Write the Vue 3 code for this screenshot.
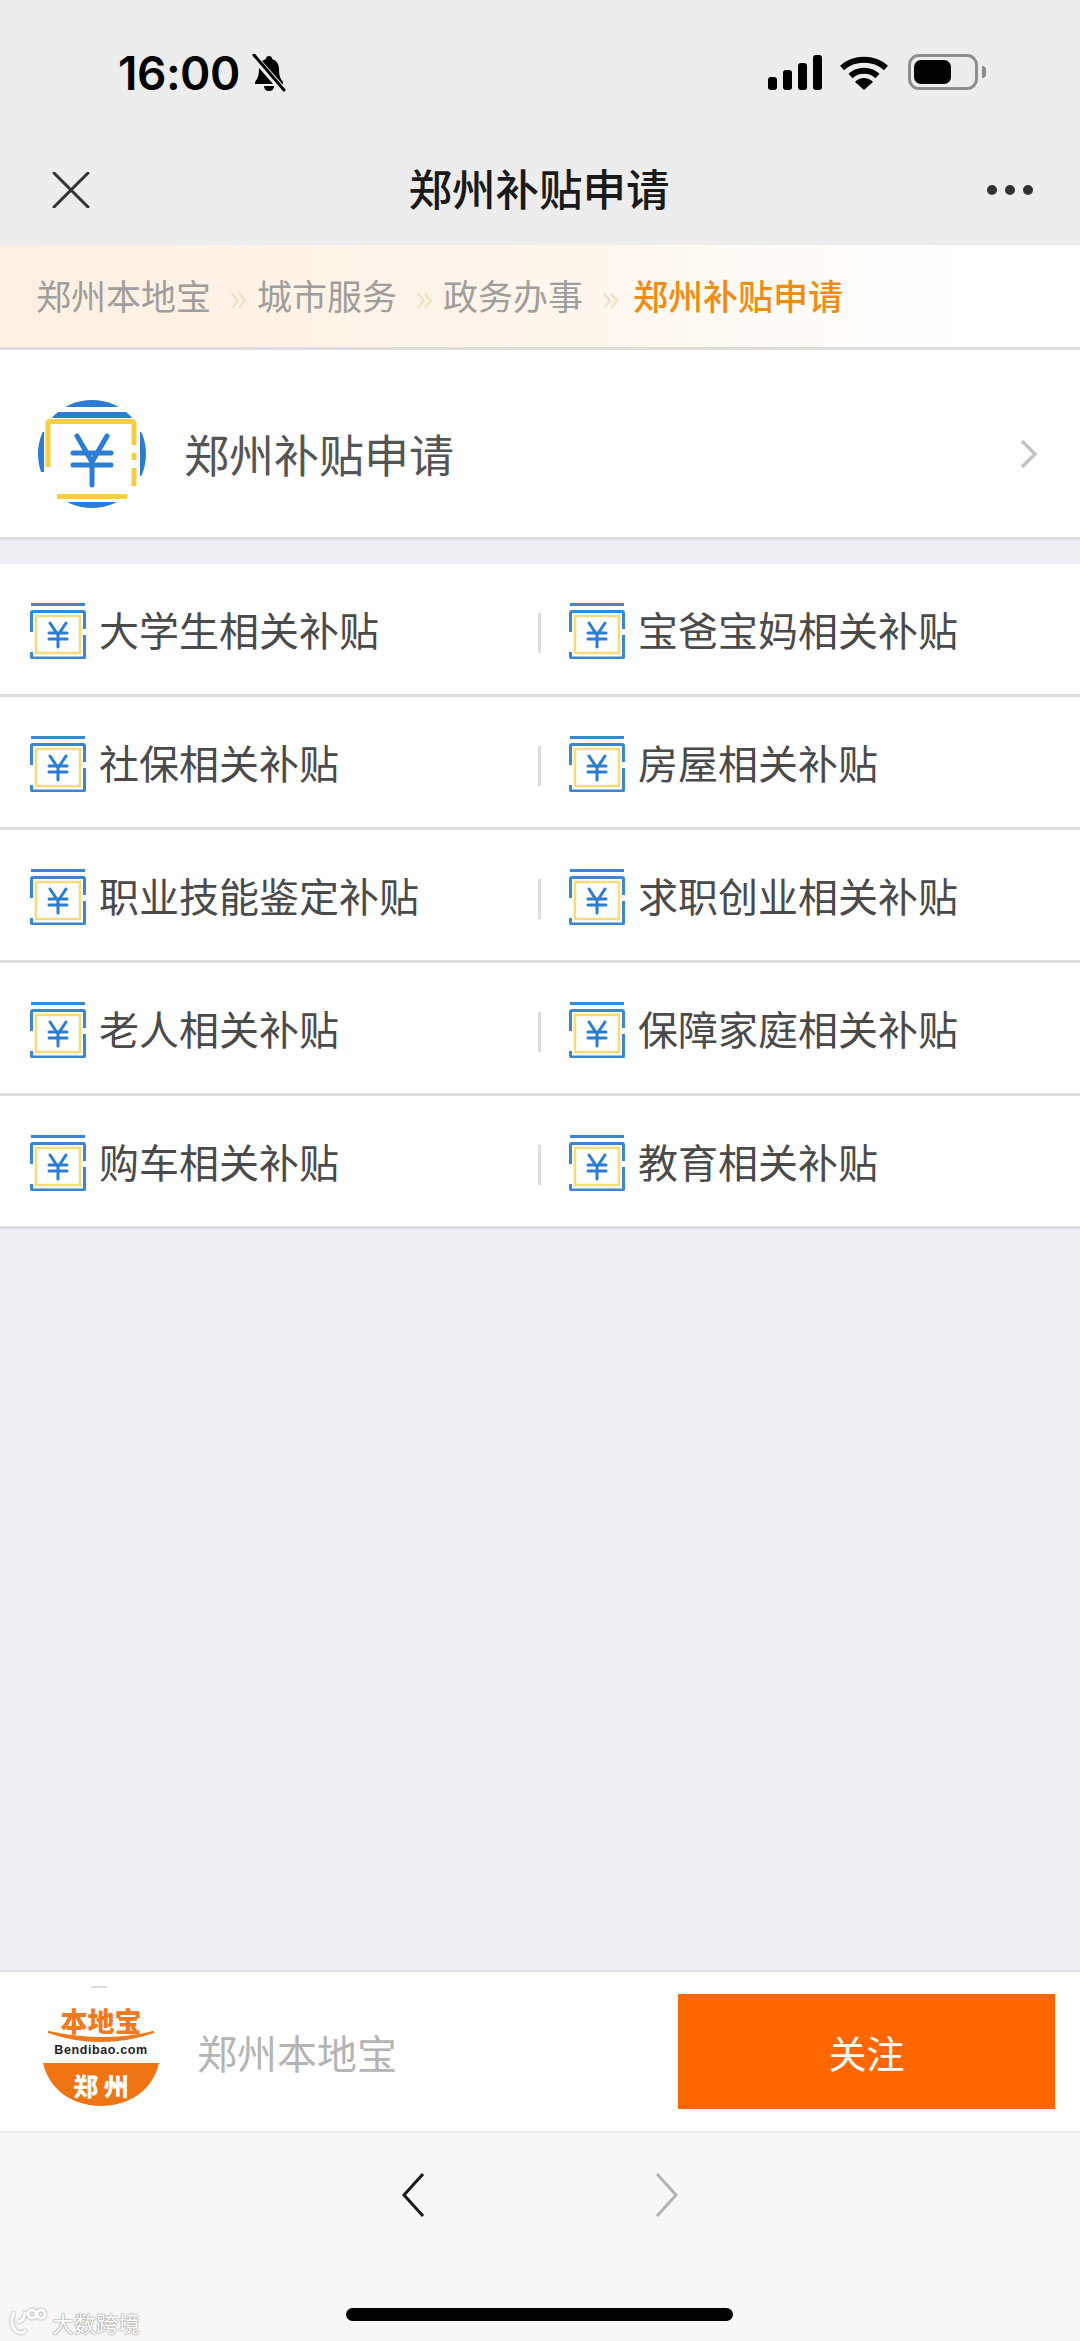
<template>
  <div class="page">
    <header class="top">
      <div class="status">
        <div class="status-left">
          <span class="time">16:00</span>
          <svg class="bell" viewBox="0 0 38 38">
            <path d="M19 2c2 0 3 1.300 3 3 5 1.500 7 5.500 7 10 0 6 1 9 4 13v2H5v-2c3-4 4-7 4-13 0-4.500 2-8.500 7-10 0-1.700 1-3 3-3z" fill="#000" />
            <path d="M14 32h10c0 3-2 5-5 5s-5-2-5-5z" fill="#000" />
            <path d="M4 3l29 33" stroke="#ededed" stroke-width="7" />
            <path d="M4 1l30 35" stroke="#000" stroke-width="3" stroke-linecap="round" />
          </svg>
        </div>
        <div class="status-right">
          <div class="signal">
            <i v-for="h in [13, 20, 27, 35]" :key="h" :style="{ height: h + 'px' }"></i>
          </div>
          <svg class="wifi" viewBox="0 0 48 35">
            <path d="M2 13C14 2 34 2 46 13" fill="none" stroke="#000" stroke-width="6" />
            <path d="M10.500 21C18 14 30 14 37.500 21" fill="none" stroke="#000" stroke-width="6" />
            <path d="M15 27C20 21.500 28 21.500 33 27L24 35z" fill="#000" />
          </svg>
          <div class="battery">
            <div class="battery-body"><span class="battery-fill"></span></div>
            <span class="battery-nub"></span>
          </div>
        </div>
      </div>
      <div class="nav">
        <svg class="close" viewBox="0 0 38 36">
          <path d="M2 1l34 34M36 1L2 35" stroke="#333" stroke-width="3" stroke-linecap="round" />
        </svg>
        <span class="nav-title">郑州补贴申请</span>
        <div class="more"><i></i><i></i><i></i></div>
      </div>
    </header>

    <nav class="crumbs">
      <template v-for="(c, i) in crumbs" :key="c">
        <span class="crumb" :class="{ current: i === crumbs.length - 1 }">{{ c }}</span>
        <span v-if="i < crumbs.length - 1" class="crumb-sep">»</span>
      </template>
    </nav>

    <section class="head-card">
      <svg class="head-icon" viewBox="0 0 108 108">
        <defs>
          <clipPath id="coin"><circle cx="54" cy="54" r="54" /></clipPath>
        </defs>
        <g clip-path="url(#coin)" fill="#2b7cd3">
          <rect x="0" y="0" width="108" height="7" />
          <rect x="0" y="12" width="108" height="6" />
          <rect x="0" y="32" width="6" height="40" />
          <rect x="102" y="32" width="6" height="44" />
          <rect x="0" y="102" width="108" height="6" />
        </g>
        <path d="M10 67V24q0-2.500 2.500-2.500h81q2.500 0 2.500 2.500v21M96 53v7M96 68v18M19 96.500h70" fill="none" stroke="#f2cf45" stroke-width="5" />
        <path d="M39 36l15 26 15-26M35 53h38M35 65h38M54 62v23" fill="none" stroke="#2b7cd3" stroke-width="5" stroke-linecap="round" stroke-linejoin="round" />
      </svg>
      <span class="head-text">郑州补贴申请</span>
      <svg class="head-arrow" viewBox="0 0 18 30">
        <path d="M2 2l13 13L2 28" fill="none" stroke="#c4c4c4" stroke-width="3.500" />
      </svg>
    </section>

    <main class="main">
      <ul class="grid">
        <li v-for="(item, i) in items" :key="item" class="cell" :class="{ right: i % 2 === 1 }">
          <svg class="cell-icon" viewBox="0 0 56 56">
            <path d="M1 1.500h54" stroke="#3b86cf" stroke-width="3" />
            <path d="M1.500 29V10q0-1.500 1.500-1.500h50q1.500 0 1.500 1.500v16M54.500 32v22q0 1-1 1H3q-1.500 0-1.500-1.500V49" fill="none" stroke="#3b86cf" stroke-width="3" />
            <rect x="6" y="13" width="44" height="37" fill="none" stroke="#f4dc7c" stroke-width="2.500" />
            <path d="M20 20l8 12 8-12M19 30h18M19 36h18M28 32v12" fill="none" stroke="#2b7cd3" stroke-width="3" stroke-linecap="round" stroke-linejoin="round" />
          </svg>
          <span class="cell-text">{{ item }}</span>
        </li>
      </ul>
    </main>

    <footer class="follow">
      <svg class="logo" viewBox="0 0 120 122">
        <path d="M50 1h16" stroke="#bbb" stroke-width="1" />
        <text x="60" y="46" class="logo-top" text-anchor="middle">本地宝</text>
        <path d="M7 46q52 18 106 0q-50 12-106 0z" fill="#ef7a1f" stroke="#ef7a1f" stroke-width="2" />
        <text x="60" y="68" class="logo-mid" text-anchor="middle">Bendibao.com</text>
        <path d="M2 77h116C112 104 88 120 60 120S8 104 2 77z" fill="#ef7414" />
        <text x="60" y="110" class="logo-bot" text-anchor="middle">郑 州</text>
      </svg>
      <span class="follow-name">郑州本地宝</span>
      <button class="follow-btn">关注</button>
    </footer>

    <div class="bottom">
      <div class="arrows">
        <svg viewBox="0 0 24 44"><path d="M22 1L3 22l19 21" fill="none" stroke="#1a1a1a" stroke-width="3" /></svg>
        <svg viewBox="0 0 24 44"><path d="M2 1l19 21L2 43" fill="none" stroke="#b4b4b4" stroke-width="3" /></svg>
      </div>
      <div class="home-bar"></div>
      <div class="watermark">
        <svg viewBox="0 0 40 28">
          <path d="M6 4c-3 7-3 14 2 19 4 3 8 2 10-1M10 14c5-1 7-5 7-10M20 6a4 4 0 1 0 8 0a4 4 0 1 0-8 0M29 6a4 4 0 1 0 8 0a4 4 0 1 0-8 0" fill="none" stroke="#fff" stroke-width="3" />
        </svg>
        <span>大数跨境</span>
      </div>
    </div>
  </div>
</template>

<script setup>
const crumbs = ['郑州本地宝', '城市服务', '政务办事', '郑州补贴申请'];

const items = [
  '大学生相关补贴',
  '宝爸宝妈相关补贴',
  '社保相关补贴',
  '房屋相关补贴',
  '职业技能鉴定补贴',
  '求职创业相关补贴',
  '老人相关补贴',
  '保障家庭相关补贴',
  '购车相关补贴',
  '教育相关补贴'
];
</script>

<style>
html,
body {
  margin: 0;
  background: #eeeff4;
}
</style>

<style scoped>
.page {
  width: 1080px;
  height: 2341px;
  display: flex;
  flex-direction: column;
  position: relative;
  overflow: hidden;
  background: #eeeff4;
  font-family: "Noto Sans CJK SC", "Noto Sans", sans-serif;
  color: #4a4a4a;
}

.top {
  height: 245px;
  background: #ededed;
  flex: none;
}

.status {
  height: 145px;
  box-sizing: border-box;
  padding: 54px 94px 0 118px;
  display: flex;
  justify-content: space-between;
  align-items: flex-start;
}

.status-left {
  display: flex;
  align-items: center;
  gap: 10px;
}

.time {
  font-family: Inter, sans-serif;
  font-size: 46px;
  line-height: 38px;
  font-weight: 600;
  letter-spacing: -0.5px;
  color: #000;
}

.bell {
  width: 38px;
  height: 38px;
}

.status-right {
  display: flex;
  align-items: flex-start;
}

.signal {
  display: flex;
  align-items: flex-end;
  gap: 6px;
  height: 35px;
  margin-top: 1px;
}

.signal i {
  display: block;
  width: 9px;
  background: #000;
  border-radius: 3px;
}

.wifi {
  width: 48px;
  height: 35px;
  margin: 1px 0 0 18px;
}

.battery {
  display: flex;
  align-items: center;
  margin-left: 20px;
}

.battery-body {
  width: 70px;
  height: 36px;
  box-sizing: border-box;
  border: 3px solid #8e8e8e;
  border-radius: 11px;
  padding: 3px;
}

.battery-fill {
  display: block;
  width: 37px;
  height: 24px;
  background: #000;
  border-radius: 7px;
}

.battery-nub {
  width: 4px;
  height: 12px;
  margin-left: 4px;
  background: #8e8e8e;
  border-radius: 0 4px 4px 0;
}

.nav {
  height: 90px;
  box-sizing: border-box;
  padding-bottom: 6px;
  position: relative;
  display: flex;
  align-items: center;
  justify-content: center;
}

.close {
  position: absolute;
  left: 52px;
  top: 27px;
  width: 38px;
  height: 36px;
}

.nav-title {
  font-size: 43.500px;
  font-weight: 500;
  color: #1a1a1a;
  margin-right: 2px;
}

.more {
  position: absolute;
  left: 987px;
  top: 40px;
  display: flex;
  gap: 8px;
}

.more i {
  display: block;
  width: 10px;
  height: 10px;
  border-radius: 50%;
  background: #333;
}

.crumbs {
  height: 105px;
  flex: none;
  box-sizing: border-box;
  padding: 0 0 3px 36px;
  display: flex;
  align-items: center;
  background: linear-gradient(90deg, #fdf0e2 0%, #fff5ea 45%, #ffffff 90%);
  border-bottom: 3px solid #dedede;
}

.crumb {
  font-size: 35px;
  line-height: 50px;
  color: #a09e9c;
}

.crumb.current {
  margin-left: 4px;
  color: #ef8c14;
  font-weight: 500;
}

.crumb-sep {
  width: 20px;
  margin: 0 9px 0 17px;
  font-size: 40px;
  line-height: 50px;
  text-align: center;
  color: #f3e2c8;
}

.head-card {
  height: 190px;
  flex: none;
  box-sizing: border-box;
  padding: 20px 42px 0 38px;
  display: flex;
  align-items: center;
  background: #fff;
  border-bottom: 3px solid #dedede;
}

.head-icon {
  width: 108px;
  height: 108px;
  flex: none;
}

.head-text {
  flex: 1;
  margin-left: 38px;
  font-size: 45px;
  color: #555;
}

.head-arrow {
  width: 18px;
  height: 30px;
}

.main {
  flex: 1;
  padding-top: 24px;
}

.grid {
  list-style: none;
  margin: 0;
  padding: 0;
  display: grid;
  grid-template-columns: 538px 542px;
  background: #fff;
}

.cell {
  height: 133px;
  box-sizing: border-box;
  padding-left: 30px;
  display: flex;
  align-items: center;
  border-bottom: 3px solid #dedede;
  position: relative;
}

.cell.right {
  padding-left: 31px;
}

.cell.right::before {
  content: "";
  position: absolute;
  left: 0;
  top: 49px;
  width: 3px;
  height: 40px;
  background: #dcdcdc;
}

.cell-icon {
  width: 56px;
  height: 56px;
  flex: none;
  margin-top: 3px;
}

.cell-text {
  margin-left: 13px;
  font-size: 40px;
  color: #4a4a4a;
}

.follow {
  height: 163px;
  flex: none;
  box-sizing: border-box;
  padding: 0 25px 0 41px;
  display: flex;
  align-items: center;
  background: #fff;
  border-top: 2px solid #e2e2e2;
  border-bottom: 2px solid #e8e8e8;
}

.logo {
  width: 120px;
  height: 122px;
  flex: none;
  margin-top: -10px;
}

.logo-top {
  font-size: 27px;
  font-weight: 900;
  fill: #ef7a1f;
}

.logo-mid {
  font-family: "Liberation Sans", sans-serif;
  font-size: 12.500px;
  font-weight: 700;
  letter-spacing: 0.6px;
  fill: #222;
}

.logo-bot {
  font-size: 25px;
  font-weight: 900;
  fill: #fff;
}

.follow-name {
  flex: 1;
  margin-left: 36px;
  font-size: 40px;
  color: #b4b4b4;
}

.follow-btn {
  width: 377px;
  height: 115px;
  border: 0;
  padding: 0;
  background: #ff6600;
  color: #fff;
  font-family: inherit;
  font-size: 38px;
}

.bottom {
  height: 208px;
  flex: none;
  background: #f7f7f7;
  position: relative;
}

.arrows {
  display: flex;
  justify-content: center;
  gap: 230px;
  padding-top: 40px;
}

.arrows svg {
  width: 24px;
  height: 44px;
}

.home-bar {
  position: absolute;
  left: 346px;
  top: 175px;
  width: 387px;
  height: 13px;
  border-radius: 7px;
  background: #000;
}

.watermark {
  position: absolute;
  left: 8px;
  top: 174px;
  display: flex;
  align-items: center;
  gap: 4px;
  color: #fff;
  font-size: 22px;
  line-height: 30px;
  text-shadow: 0 0 2px #888, 0 0 1px #888;
}

.watermark svg {
  width: 40px;
  height: 28px;
  filter: drop-shadow(0 0 1px #888);
}
</style>
